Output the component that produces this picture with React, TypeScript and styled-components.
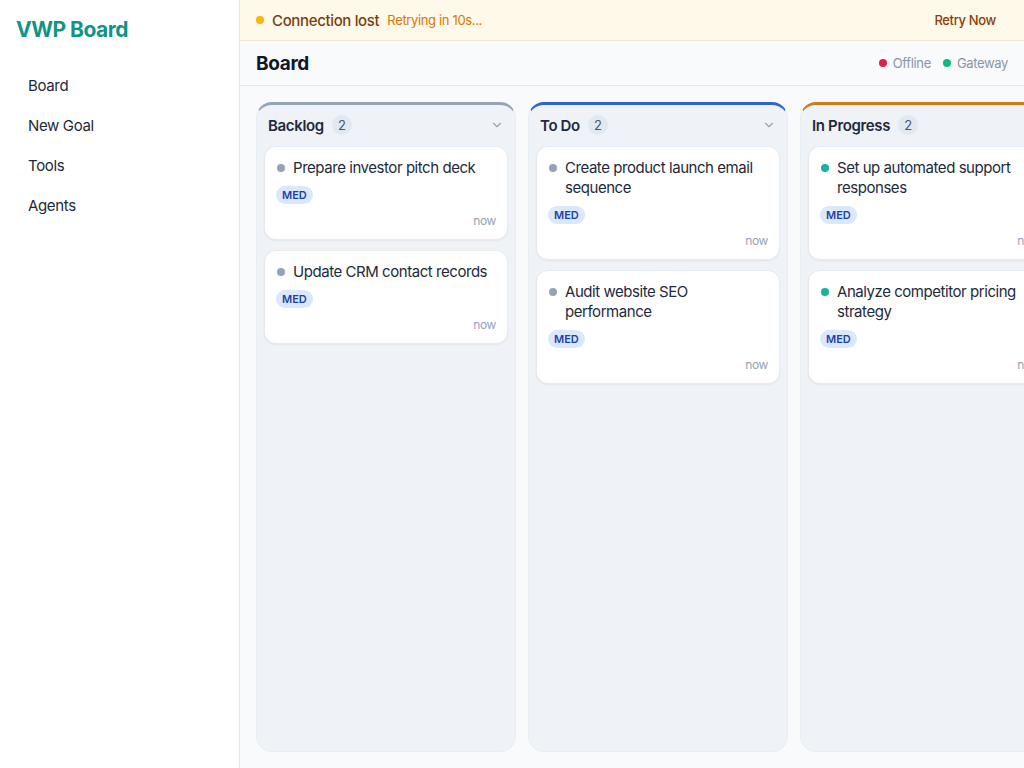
import React from "react";
import styled, { createGlobalStyle } from "styled-components";
import { ChevronDown } from "lucide-react";

const GlobalStyle = createGlobalStyle`
  html, body, #root {
    margin: 0;
    height: 100%;
  }
  body {
    font-family: Inter, "Noto Sans", sans-serif;
    color: #1e293b;
    background: #f8fafc;
    letter-spacing: -0.35px;
  }
  * {
    box-sizing: border-box;
  }
`;

type Task = { title: string };
type Column = { name: string; accent: string; dot: string; tasks: Task[] };

const columns: Column[] = [
  {
    name: "Backlog",
    accent: "#94a3b8",
    dot: "#94a3b8",
    tasks: [{ title: "Prepare investor pitch deck" }, { title: "Update CRM contact records" }],
  },
  {
    name: "To Do",
    accent: "#2f63d3",
    dot: "#94a3b8",
    tasks: [{ title: "Create product launch email sequence" }, { title: "Audit website SEO performance" }],
  },
  {
    name: "In Progress",
    accent: "#d07a1c",
    dot: "#14b59b",
    tasks: [{ title: "Set up automated support responses" }, { title: "Analyze competitor pricing strategy" }],
  },
];

const Layout = styled.div`
  display: flex;
  height: 100vh;
  overflow: hidden;
`;

const Sidebar = styled.aside`
  width: 240px;
  flex-shrink: 0;
  background: #ffffff;
  border-right: 1px solid #e5e7eb;
  padding: 16px 0 0 16px;
`;

const Logo = styled.div`
  font-size: 21px;
  font-weight: 700;
  color: #0f9486;
  letter-spacing: -0.5px;
  line-height: 28px;
`;

const Nav = styled.nav`
  display: flex;
  flex-direction: column;
  margin-top: 22px;
`;

const NavItem = styled.a`
  font-size: 15px;
  color: #1e293b;
  line-height: 20px;
  padding: 10px 12px;
  text-decoration: none;
`;

const Main = styled.main`
  flex: 1;
  min-width: 0;
  display: flex;
  flex-direction: column;
`;

const Banner = styled.div`
  height: 41px;
  display: flex;
  align-items: center;
  padding: 0 16px;
  background: #fef9e8;
  border-bottom: 1px solid #efe8d4;
  gap: 8px;
`;

const Dot = styled.span<{ $color: string }>`
  width: 8px;
  height: 8px;
  border-radius: 50%;
  background: ${(p) => p.$color};
  flex-shrink: 0;
`;

const BannerTitle = styled.span`
  font-size: 15px;
  font-weight: 500;
  color: #7a3e10;
`;

const BannerSub = styled.span`
  font-size: 13px;
  color: #d97706;
`;

const RetryButton = styled.button`
  margin-left: auto;
  border: none;
  background: transparent;
  font-family: inherit;
  letter-spacing: inherit;
  font-size: 13px;
  font-weight: 500;
  color: #8a3f0c;
  padding: 4px 12px;
  cursor: pointer;
`;

const Header = styled.header`
  height: 45px;
  display: flex;
  align-items: center;
  justify-content: space-between;
  padding: 0 16px;
  background: #f8fafc;
  border-bottom: 1px solid #e5e7eb;
`;

const PageTitle = styled.h1`
  margin: 0;
  font-size: 19px;
  font-weight: 700;
  color: #0f172a;
`;

const StatusGroup = styled.div`
  display: flex;
  align-items: center;
  gap: 12px;
`;

const Status = styled.span`
  display: flex;
  align-items: center;
  gap: 6px;
  font-size: 13px;
  color: #8b95a7;
`;

const BoardArea = styled.div`
  flex: 1;
  min-height: 0;
  display: flex;
  gap: 12px;
  padding: 16px;
  overflow: hidden;
`;

const ColumnBox = styled.section<{ $accent: string }>`
  width: 260px;
  flex-shrink: 0;
  display: flex;
  flex-direction: column;
  background: #eff3f8;
  border: 1px solid #e9eef4;
  border-top: 3px solid ${(p) => p.$accent};
  border-radius: 16px;
`;

const ColumnHeader = styled.div`
  display: flex;
  align-items: center;
  gap: 8px;
  height: 22px;
  margin: 9px 11px 10px 11px;
`;

const ColumnName = styled.span`
  font-size: 15px;
  font-weight: 600;
  color: #1e293b;
`;

const Count = styled.span`
  font-size: 13px;
  color: #475569;
  background: #e2e8f0;
  border-radius: 10px;
  height: 20px;
  min-width: 20px;
  padding: 0 6px;
  display: flex;
  align-items: center;
  justify-content: center;
`;

const Chevron = styled(ChevronDown)`
  margin-left: auto;
  color: #94a3b8;
`;

const CardList = styled.div`
  display: flex;
  flex-direction: column;
  gap: 10px;
  padding: 0 7px;
`;

const Card = styled.article`
  background: #ffffff;
  border: 1px solid #e6ebf1;
  border-radius: 12px;
  padding: 11px;
  box-shadow: 0 1px 2px rgba(15, 23, 42, 0.05);
`;

const CardTitleRow = styled.div`
  display: flex;
  align-items: flex-start;
  gap: 8px;
  padding-left: 1px;
`;

const TaskDot = styled(Dot)`
  margin-top: 6px;
`;

const CardTitle = styled.div`
  font-size: 15px;
  line-height: 20px;
  color: #1e293b;
  letter-spacing: -0.45px;
`;

const Priority = styled.span`
  display: inline-block;
  margin-top: 8px;
  height: 18px;
  line-height: 18px;
  padding: 0 6px;
  border-radius: 9px;
  background: #dbe8fb;
  color: #1e40af;
  font-size: 11px;
  font-weight: 600;
  letter-spacing: 0;
`;

const CardFooter = styled.div`
  margin-top: 10px;
  text-align: right;
  font-size: 12px;
  line-height: 14px;
  color: #94a3b8;
`;

export default function App() {
  return (
    <>
      <GlobalStyle />
      <Layout>
        <Sidebar>
          <Logo>VWP Board</Logo>
          <Nav>
            <NavItem>Board</NavItem>
            <NavItem>New Goal</NavItem>
            <NavItem>Tools</NavItem>
            <NavItem>Agents</NavItem>
          </Nav>
        </Sidebar>
        <Main>
          <Banner>
            <Dot $color="#f5b50a" />
            <BannerTitle>Connection lost</BannerTitle>
            <BannerSub>Retrying in 10s...</BannerSub>
            <RetryButton>Retry Now</RetryButton>
          </Banner>
          <Header>
            <PageTitle>Board</PageTitle>
            <StatusGroup>
              <Status>
                <Dot $color="#e11d48" />
                Offline
              </Status>
              <Status>
                <Dot $color="#10b981" />
                Gateway
              </Status>
            </StatusGroup>
          </Header>
          <BoardArea>
            {columns.map((col) => (
              <ColumnBox key={col.name} $accent={col.accent}>
                <ColumnHeader>
                  <ColumnName>{col.name}</ColumnName>
                  <Count>{col.tasks.length}</Count>
                  <Chevron size={14} />
                </ColumnHeader>
                <CardList>
                  {col.tasks.map((t) => (
                    <Card key={t.title}>
                      <CardTitleRow>
                        <TaskDot $color={col.dot} />
                        <CardTitle>{t.title}</CardTitle>
                      </CardTitleRow>
                      <Priority>MED</Priority>
                      <CardFooter>now</CardFooter>
                    </Card>
                  ))}
                </CardList>
              </ColumnBox>
            ))}
          </BoardArea>
        </Main>
      </Layout>
    </>
  );
}
